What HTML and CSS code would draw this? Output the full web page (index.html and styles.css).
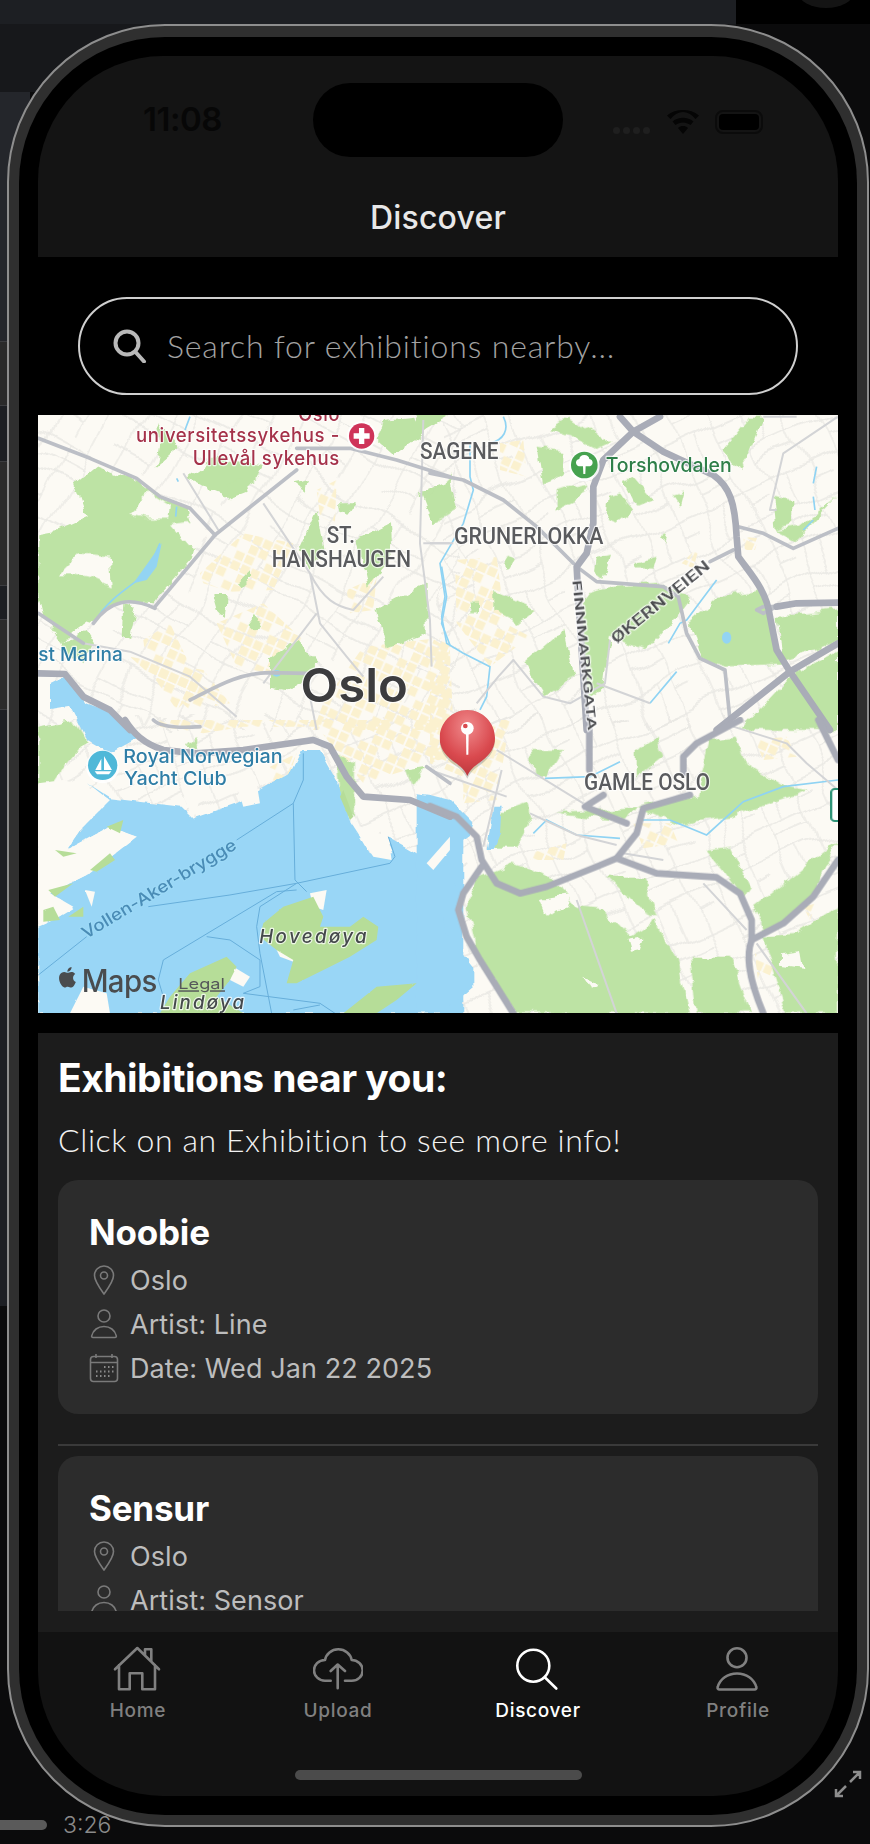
FILE: index.html
```html
<!DOCTYPE html>
<html lang="en">
<head>
<meta charset="utf-8">
<title>Discover</title>
<link rel="stylesheet" href="styles.css">
</head>
<body>
<div class="desktop">
  <div class="desk-top"><div class="desk-tab"></div><div class="desk-corner"><span class="desk-circle"></span></div></div>
  <div class="desk-band"></div>
  <div class="desk-rows">
    <div class="row row-a"></div><div class="row row-b"></div><div class="row row-c"></div><div class="row row-d"></div><div class="row row-e"></div><div class="row row-f"></div><div class="row row-g"></div>
  </div>
  <div class="desk-progress"></div>
  <span class="desk-time">3:26</span>
  <svg class="desk-expand" viewBox="0 0 28 28"><path d="M16 12 26 2M19 2h7v7M12 16 2 26M2 19v7h7"/></svg>
</div>

<div class="phone">
  <div class="bezel">
    <main class="screen">
      <header class="header">
        <div class="status">
          <span class="clock">11:08</span>
          <span class="notch"></span>
          <div class="status-icons">
            <span class="dots"><i></i><i></i><i></i><i></i></span>
            <svg class="wifi" viewBox="0 0 32 24"><path d="M16 24 11 18c3-2.600 7-2.600 10 0zM8.500 15 5.500 11.500c6-5 15-5 21 0L23.500 15c-4.500-3.500-10.500-3.500-15 0zM3.500 9 0 5.500C9-1.800 23-1.800 32 5.500L28.500 9C21-.5 11-.5 3.500 9z"/></svg>
            <span class="battery"><i></i></span>
          </div>
        </div>
        <h1 class="title">Discover</h1>
      </header>

      <div class="search-wrap">
        <div class="search">
          <svg class="search-icon" viewBox="0 0 34 34"><circle cx="14" cy="14" r="11.500"/><path d="m22.500 23 8.500 9.500"/></svg>
          <span class="placeholder">Search for exhibitions nearby...</span>
        </div>
      </div>

      <svg class="map" viewBox="0 0 800 598" role="img" aria-label="Map of Oslo">
        <defs>
          <filter id="rough" x="-5%" y="-5%" width="110%" height="110%">
            <feTurbulence type="fractalNoise" baseFrequency=".06" numOctaves="3" seed="4"/>
            <feDisplacementMap in="SourceGraphic" scale="11" xChannelSelector="R" yChannelSelector="G"/>
          </filter>
          <filter id="shore" x="-5%" y="-5%" width="110%" height="110%">
            <feTurbulence type="fractalNoise" baseFrequency=".09" numOctaves="2" seed="9"/>
            <feDisplacementMap in="SourceGraphic" scale="5" xChannelSelector="R" yChannelSelector="G"/>
          </filter>
          <filter id="wobble" x="0" y="0" width="100%" height="100%">
            <feTurbulence type="fractalNoise" baseFrequency=".014" numOctaves="2" seed="2"/>
            <feDisplacementMap in="SourceGraphic" scale="34" xChannelSelector="G" yChannelSelector="R"/>
          </filter>
          <pattern id="streets" width="84" height="84" patternUnits="userSpaceOnUse" patternTransform="rotate(28)">
            <path d="M0 10H84M0 46H84M0 70H40M14 0V84M62 0V84M38 10V46M14 30H62M40 46V84" class="street"/>
          </pattern>
          <pattern id="streets2" width="70" height="70" patternUnits="userSpaceOnUse" patternTransform="rotate(-24)">
            <path d="M0 8H70M0 44H70M12 0V70M52 0V70M30 8V44M52 24H70M12 58H52" class="street"/>
          </pattern>
          <pattern id="blocks" width="96" height="96" patternUnits="userSpaceOnUse" patternTransform="rotate(24)">
            <path d="M3 3H29V29H3zM35 3H61V29H35zM3 67H29V93H3zM67 35H93V61H67zM35 67H61V93H35zM3 35H29V61H3zM67 67H93V93H67z" class="block"/>
          </pattern>
          <radialGradient id="pinfill" cx=".5" cy=".25" r=".8">
            <stop offset="0" stop-color="#f08a8c"/><stop offset=".6" stop-color="#d9494e"/><stop offset="1" stop-color="#b6353a"/>
          </radialGradient>
        </defs>

        <g class="geometry">
          <rect width="800" height="598" class="land"/>
          <g filter="url(#wobble)">
            <rect x="-20" y="-20" width="440" height="330" fill="url(#streets)"/>
            <rect x="400" y="-20" width="420" height="330" fill="url(#streets2)"/>
            <rect x="-20" y="300" width="840" height="320" fill="url(#streets2)"/>
          </g>

          <!-- yellow city blocks -->
          <g fill="url(#blocks)">
            <g transform="translate(-8 -5) scale(.3333)">
              <path d="M510 490 640 370 790 400 730 540 600 545 520 520z"/>
              <path d="M340 690 420 640 510 830 440 900 350 770z"/>
              <path d="M560 640 700 580 820 690 720 790 620 770z"/>
              <path d="M860 240 920 210 915 340 870 320z"/>
              <path d="M950 540 1040 500 1030 600 960 610z"/>
              <path d="M1000 710 1260 680 1260 960 850 960 880 880z"/>
              <path d="M300 740 520 780 600 880 480 900z"/>
            </g>
            <g transform="translate(392 -5) scale(.3333)">
              <path d="M75 450 200 440 225 640 300 680 180 770 80 640z"/>
              <path d="M0 680 60 720 70 960 0 960z"/>
              <path d="M210 100 280 90 290 200 210 180z"/>
              <path d="M755 460 810 405 790 475z"/>
              <path d="M940 380 985 385 975 420 945 420z"/>
            </g>
            <g transform="translate(-8 305) scale(.3333)">
              <path d="M390 20 520 40 640 20 860 20 1000 190 1260 110 1260 0 380 0z"/>
              <path d="M720 140 800 100 770 190 720 180z"/>
            </g>
            <g transform="translate(392 305) scale(.3333)">
              <path d="M0 0 240 0 200 240 100 250 100 170 0 130z"/>
              <path d="M610 310 720 310 745 370 640 385z"/>
              <path d="M975 60 1070 50 1100 110 1000 120z"/>
              <path d="M975 700 1030 740 1010 790 985 790z"/>
              <path d="M300 400 410 370 400 420 300 420z"/>
              <path d="M1120 560 1160 550 1140 600z"/>
            </g>
          </g>

          <!-- parks -->
          <g class="park" filter="url(#rough)">
            <g transform="translate(-8 -5) scale(.3333)">
              <path d="M135 220 200 165 330 215 395 265 470 290 500 400 490 440 370 580 290 575 210 610 130 665 100 700 40 620 25 560 25 370 80 360 170 320z"/>
              <path d="M470 205 560 140 700 170 680 210 590 260 540 240z"/>
              <path d="M1060 30 1150 20 1170 80 1090 135 1040 90z"/>
              <path d="M1170 250 1240 220 1260 290 1200 330z"/>
              <path d="M810 410 860 300 880 420 840 480z"/>
              <path d="M980 390 1080 340 1085 440 1010 530z"/>
              <path d="M1040 600 1190 520 1190 670 1070 715z"/>
              <path d="M720 750 800 690 860 760 790 840 720 830z"/>
              <path d="M550 555 590 555 585 620 565 610z"/>
              <path d="M650 640 670 610 695 640 670 660z"/>
              <path d="M630 520 660 490 660 510 640 530z"/>
              <path d="M280 580 320 590 300 690 275 680z"/>
              <path d="M930 280 975 280 950 320 935 310z"/>
              <path d="M385 40 450 110 380 170 390 110z"/>
              <path d="M1260 20 1170 0 1100 130 1190 60z"/>
              <path d="M580 220 640 205 650 245 600 265z"/>
              <path d="M790 220 840 210 830 250z"/>
              <path d="M100 700 170 660 195 700 160 760 120 740z"/>
            </g>
            <g transform="translate(392 -5) scale(.3333)">
              <path d="M480 550 550 530 700 520 780 560 720 640 650 720 540 680 520 830 470 870 445 600z"/>
              <path d="M780 640 870 560 1000 540 1040 720 1060 760 890 770 810 745z"/>
              <path d="M1040 620 1224 600 1224 700 1060 750z"/>
              <path d="M930 960 1080 800 1224 720 1224 960z"/>
              <path d="M880 120 960 20 1000 20 950 150 930 180z"/>
              <path d="M1030 260 1090 270 1090 340 1040 360z"/>
              <path d="M320 110 400 120 400 190 340 230z"/>
              <path d="M580 210 610 200 670 270 620 290z"/>
              <path d="M280 760 400 660 430 800 340 860z"/>
              <path d="M190 540 320 600 270 640 190 600z"/>
              <path d="M360 60 420 20 540 100 500 120 420 80z"/>
              <path d="M380 240 470 220 440 270 380 300z"/>
              <path d="M500 450 540 440 520 510 495 490z"/>
              <path d="M115 580 150 580 150 610 115 610z"/>
              <path d="M0 260 60 200 80 300 0 340z"/>
              <path d="M1224 260 1110 350 1040 360 1100 390z"/>
              <path d="M540 260 570 250 610 300 560 340 530 330z"/>
              <path d="M610 460 680 440 670 475 615 475z"/>
              <path d="M690 380 710 370 700 400z"/>
              <path d="M730 260 760 250 750 290z"/>
              <path d="M1180 820 1224 760 1224 950 1150 900z"/>
              <path d="M240 440 260 450 240 480 225 465z"/>
            </g>
            <g transform="translate(-8 305) scale(.3333)">
              <path d="M25 20 130 0 170 60 110 130 70 190 25 190z"/>
              <path d="M470 80 500 50 505 85z"/>
              <path d="M920 100 975 130 975 290 930 260z"/>
              <path d="M1130 150 1190 140 1150 200z"/>
            </g>
            <g transform="translate(392 305) scale(.3333)">
              <path d="M110 560 150 470 250 430 330 460 400 500 430 560 520 570 600 650 680 600 690 630 740 720 780 880 260 880 240 860 140 700z"/>
              <path d="M780 710 900 710 960 880 800 880z"/>
              <path d="M840 60 920 50 950 130 1060 200 1140 210 900 290 740 310 620 260 800 230z"/>
              <path d="M305 90 400 90 350 170 310 170z"/>
              <path d="M180 290 290 250 300 310 260 380 185 380z"/>
              <path d="M970 560 1100 460 1224 360 1140 540 1070 610 1000 640z"/>
              <path d="M1000 650 1100 640 1224 560 1224 880 1070 880z"/>
              <path d="M830 390 900 380 960 500 940 530 880 450z"/>
              <path d="M380 280 620 260 590 300 440 290z"/>
              <path d="M530 470 640 470 680 590 620 560z"/>
              <path d="M620 90 680 50 700 110 620 170z"/>
            </g>
          </g>
          <!-- cleared patches -->
          <g class="land" filter="url(#rough)">
            <g transform="translate(392 305) scale(.3333)">
              <path d="M330 540 420 525 410 565 350 590z"/>
              <path d="M590 660 640 650 630 690 600 695z"/>
              <path d="M460 770 500 790 480 800z"/>
              <path d="M1050 700 1110 690 1120 750 1050 740z"/>
            </g>
            <g transform="translate(-8 -5) scale(.3333)">
              <path d="M90 490 150 430 240 440 245 530 180 500 130 490z"/>
              <path d="M300 310 360 250 420 290 415 320 340 320z"/>
              <path d="M420 340 500 330 540 370 490 420z"/>
            </g>
          </g>

          <!-- water -->
          <g class="water" filter="url(#shore)">
            <g transform="translate(-8 305) scale(.3333)">
              <path d="M25 620 70 600 130 565 60 520 180 460 320 350 240 320 110 390 150 330 235 240 170 190 240 235 455 260 490 295 620 250 780 160 815 90 870 90 920 180 960 300 1020 400 1090 400 1070 350 1190 420 1260 300 1300 300 1300 880 25 880z"/>
              <path d="M60 -110 110 -135 170 -50 250 -20 330 50 240 100 170 60 120 -40 60 -30z"/>
            </g>
            <g transform="translate(392 305) scale(.3333)">
              <path d="M-40 220 0 225 60 240 130 310 120 345 70 380 20 440 50 440 80 500 30 570 50 640 130 740 130 800 60 860 40 880-40 880z"/>
              <path d="M190 260 215 260 210 340 190 390 170 390z"/>
            </g>
          </g>
          <!-- islands -->
          <g transform="translate(-8 305) scale(.3333)" filter="url(#shore)">
            <g class="land">
              <path d="M25 190 100 180 170 200 240 240 150 330 110 390 240 320 320 350 180 460 60 520 130 560 70 600 25 610z"/>
              <path d="M625 210 680 190 690 250 640 260z"/>
              <path d="M460 230 520 210 490 295z"/>
              <path d="M120 880 160 800 230 820 240 880z"/>
              <path d="M840 520 890 510 880 570 850 560z"/>
              <path d="M740 690 800 700 790 725 750 710z"/>
              <path d="M965 310 1075 350 1085 420 1030 410z"/>
              <path d="M1190 430 1260 350 1260 390 1210 450z"/>
              <path d="M610 740 660 770 640 800 600 780z"/>
              <path d="M165 510 195 515 185 560z"/>
            </g>
            <g class="park light">
              <path d="M700 610 760 560 850 530 880 590 870 620 960 620 1000 590 1045 620 1040 660 960 710 900 740 800 790 770 790 790 720 740 690 690 650z"/>
              <path d="M480 760 590 710 620 740 600 780 560 830 640 880 390 880 420 830z"/>
              <path d="M940 880 1040 800 1160 790 1100 840 1040 880z"/>
              <path d="M75 390 140 400 100 410z"/>
              <path d="M180 450 240 400 255 420 200 455z"/>
              <path d="M230 320 280 300 270 340z"/>
              <path d="M55 510 130 490 75 530z"/>
              <path d="M115 590 160 560 160 590z"/>
              <path d="M40 570 70 560 90 600 40 605z"/>
              <path d="M930 230 960 300 970 290 940 210z"/>
            </g>
          </g>

          <!-- river and streams -->
          <g class="stream">
            <g transform="translate(-8 -5) scale(.3333)">
              <path d="M195 635C230 570 300 530 350 490L390 400"/>
              <path d="M1235 470 1250 560 1235 640 1260 705"/>
              <path d="M440 205 445 215M440 290 437 320M480 20 465 60"/>
            </g>
            <g transform="translate(392 -5) scale(.3333)">
              <path d="M220 20C240 60 220 90 180 100M120 100 120 200 130 240 100 340 30 460 45 560 35 620 50 700 100 730 180 770 170 860 150 900"/>
              <path d="M715 700 750 640 770 630 830 550 860 510M660 880 740 785"/>
              <path d="M1150 220 1160 170M1155 300 1150 260M1120 360 1150 330"/>
            </g>
            <g transform="translate(392 305) scale(.3333)">
              <path d="M345 175 480 170 570 125"/>
              <path d="M310 340 350 300 440 345 570 355M630 300 720 300 830 345 940 245 1060 200 1224 180"/>
            </g>
          </g>
          <g class="pond">
            <g transform="translate(-8 -5) scale(.3333)">
              <path d="M310 520 360 450 395 400 380 470 350 510z"/>
              <ellipse cx="740" cy="790" rx="12" ry="10"/>
            </g>
            <g transform="translate(392 -5) scale(.3333)">
              <ellipse cx="890" cy="683" rx="14" ry="18"/>
            </g>
          </g>

          <!-- ferry lines -->
          <g class="ferry" transform="translate(-8 305) scale(.3333)">
            <path d="M25 765 170 650M355 560 600 525 800 490 1080 430 1095 410 1075 350M620 360 790 250 820 180 820 100M790 250 795 480 830 515M800 490 690 560 680 620 690 700 725 880M800 510 740 515 400 720 385 780 400 830M530 650 600 660 690 720 690 800 640 820 870 850 915 880M790 870 870 855"/>
          </g>

          <!-- roads, light -->
          <g class="road-s">
            <g transform="translate(-8 -5) scale(.3333)">
              <path d="M700 280 840 490 870 640 950 740 1000 800M840 490C880 570 920 590 970 600L1060 500M1180 30 1170 400 1200 630 1205 770M1180 400H1260M700 820 860 610M300 725 480 800 620 920M840 860 860 960"/>
              <path d="M460 190 565 360M25 610 100 660 160 700 300 725"/>
            </g>
            <g transform="translate(392 -5) scale(.3333)">
              <path d="M1040 300 1020 300 1060 130 1224 20M1000 20 1100 20M0 400H70M540 690 525 820 420 880 340 860 250 750 205 800 140 880"/>
              <path d="M660 880 500 820"/>
            </g>
            <g transform="translate(392 305) scale(.3333)">
              <path d="M0 150 230 230M200 90 460 250M215 150 160 380M910 20 1070 70 1130 130 1224 210M820 490 950 630M440 540 560 880M980 670 1130 880"/>
              <path d="M300 280 440 345 560 375M580 400 700 420"/>
            </g>
          </g>
          <g class="road-m">
            <g transform="translate(-8 -5) scale(.3333)">
              <path d="M25 85 180 145 320 205 390 260 480 295 555 375"/>
              <path d="M555 375 800 180"/>
              <path d="M555 375 375 590"/>
              <path d="M375 595C300 560 240 570 190 640 M25 610 100 660 160 700"/>
              <path d="M800 115 960 115 1100 150 1260 200"/>
            </g>
            <g transform="translate(392 -5) scale(.3333)">
              <path d="M0 190 100 210 220 270 320 350 430 460"/>
              <path d="M440 470 500 515 700 530 745 560 770 670 810 745 885 780 900 930"/>
              <path d="M925 350 1000 370 1090 415 1224 355"/>
              <path d="M840 455 910 420"/>
              <path d="M1040 590 1000 590 980 600 1000 610 1040 590"/>
            </g>
            <g transform="translate(-8 305) scale(.3333)">
              <path d="M370 0C390 20 440 25 510 20M480 -60C560 -100 620 -140 720 -142L830 -140"/>
              <path d="M1190 140 1260 190"/>
            </g>
          </g>
          <!-- motorways -->
          <g class="road-l">
            <g transform="translate(392 -5) scale(.3333)">
              <path d="M570 20 610 65 700 125 850 195C900 230 915 280 920 380L925 440C960 490 1010 540 1020 620L1040 720 1080 785 1200 960"/>
              <path d="M690 20 610 65 520 150 490 230 490 340 470 430 440 470 445 560 470 960"/>
              <path d="M860 960 1080 785 1224 700"/>
              <path d="M1040 590 1100 580 1224 578"/>
            </g>
            <g transform="translate(-8 305) scale(.3333)">
              <path d="M285 0C310 40 340 70 400 90L500 100 640 90 850 60 900 80 950 170 1000 230 1140 240 1260 290"/>
              <path d="M25 -140 105 -138 160 -70 240 -30 300 30"/>
            </g>
            <g transform="translate(392 305) scale(.3333)">
              <path d="M0 258 80 290 140 350 155 420 200 490 270 520 350 500 500 440 560 415 620 340 640 265 780 225"/>
              <path d="M560 415 680 460 860 472 930 520 965 600 965 660C950 700 950 760 1000 880"/>
              <path d="M965 660 1060 610 1150 530 1224 420"/>
              <path d="M155 440 100 520 85 570 110 650 150 720 250 880"/>
              <path d="M478 0V150M760 160 760 110 800 70 930 0M1165 0 1224 120"/>
              <path d="M520 225 465 260 590 310"/>
            </g>
          </g>
        </g>

        <!-- sign at the right edge -->
        <g transform="translate(392 305) scale(.3333)">
          <rect x="1204" y="207" width="40" height="96" rx="10" class="sign"/>
        </g>

        <!-- labels -->
        <g transform="translate(-8 -5) scale(.3333)">
          <text x="805" y="32" class="lb red" textLength="125" lengthAdjust="spacingAndGlyphs">Oslo</text>
          <text x="318" y="97" class="lb red" textLength="612" lengthAdjust="spacingAndGlyphs">universitetssykehus -</text>
          <text x="488" y="165" class="lb red" textLength="442" lengthAdjust="spacingAndGlyphs">Ullevål sykehus</text>
          <circle cx="995" cy="78" r="44" class="poi-ring"/>
          <circle cx="995" cy="78" r="38" class="poi-red"/>
          <path d="M987 54h16v16h16v16h-16v16h-16V86h-16V70h16z" class="poi-white"/>
          <text x="890" y="400" class="lb dist" textLength="85" lengthAdjust="spacingAndGlyphs">ST.</text>
          <text x="725" y="472" class="lb dist" textLength="418" lengthAdjust="spacingAndGlyphs">HANSHAUGEN</text>
          <text x="25" y="752" class="lb sea" textLength="253" lengthAdjust="spacingAndGlyphs">st Marina</text>
          <text x="812" y="875" class="lb city" textLength="322" lengthAdjust="spacingAndGlyphs">Oslo</text>
        </g>
        <g transform="translate(392 -5) scale(.3333)">
          <text x="-30" y="148" class="lb dist" textLength="235" lengthAdjust="spacingAndGlyphs">SAGENE</text>
          <text x="72" y="402" class="lb dist" textLength="448" lengthAdjust="spacingAndGlyphs">GRUNERLOKKA</text>
          <text x="527" y="185" class="lb park-text" textLength="378" lengthAdjust="spacingAndGlyphs">Torshovdalen</text>
          <circle cx="463" cy="168" r="46" class="poi-ring"/>
          <circle cx="463" cy="165" r="40" class="poi-green"/>
          <path d="M463 135c9 0 15 6 15 12 7 1 10 6 10 11 0 7-6 11-13 11h-8l-1 23h-6l-1-23h-8c-7 0-13-4-13-11 0-5 3-10 10-11 0-6 6-12 15-12z" class="poi-white"/>
          <text transform="translate(428 512) rotate(84)" class="lb road-text road-a" textLength="452" lengthAdjust="spacingAndGlyphs">FINNMARKGATA</text>
          <text transform="translate(558 702) rotate(-39)" class="lb road-text road-b" textLength="366" lengthAdjust="spacingAndGlyphs">ØKERNVEIEN</text>
        </g>
        <g transform="translate(-8 305) scale(.3333)">
          <text x="280" y="130" class="lb sea" textLength="478" lengthAdjust="spacingAndGlyphs">Royal Norwegian</text>
          <text x="283" y="194" class="lb sea" textLength="307" lengthAdjust="spacingAndGlyphs">Yacht Club</text>
          <circle cx="218" cy="140" r="50" class="poi-ring"/>
          <circle cx="218" cy="136" r="44" class="poi-blue"/>
          <path d="M222 108v42h24zM214 116v34h-18zM194 154h50l-7 9h-36z" class="poi-white"/>
          <text transform="translate(168 658) rotate(-31)" class="lb ferry-text" textLength="531" lengthAdjust="spacingAndGlyphs">Vollen-Aker-brygge</text>
          <text x="688" y="670" class="lb isle" textLength="322">Hovedøya</text>
          <text x="390" y="868" class="lb isle" textLength="252">Lindøya</text>
          <path transform="translate(78 736) scale(3)" class="apple" d="M17.050 12.540c-.03-2.600 2.120-3.850 2.220-3.910-1.210-1.770-3.090-2.010-3.760-2.040-1.600-.16-3.120.94-3.930.94-.81 0-2.060-.92-3.390-.89-1.740.03-3.350 1.010-4.250 2.570-1.810 3.140-.46 7.800 1.300 10.350.86 1.250 1.890 2.650 3.240 2.600 1.300-.05 1.790-.84 3.360-.84 1.570 0 2.010.84 3.390.81 1.400-.02 2.280-1.270 3.130-2.530.99-1.450 1.390-2.860 1.420-2.930-.03-.01-2.710-1.040-2.730-4.130zM14.460 4.890c.72-.87 1.200-2.080 1.070-3.280-1.030.04-2.280.69-3.020 1.550-.66.770-1.240 2-1.090 3.180 1.150.09 2.320-.58 3.040-1.450z"/>
          <text x="155" y="815" class="maps" textLength="225" lengthAdjust="spacingAndGlyphs">Maps</text>
          <text x="445" y="808" class="legal" textLength="140" lengthAdjust="spacingAndGlyphs">Legal</text>
        </g>
        <g transform="translate(392 305) scale(.3333)">
          <text x="462" y="210" class="lb dist" textLength="378" lengthAdjust="spacingAndGlyphs">GAMLE OSLO</text>
          <path d="M112 176c-12-26-30-34-50-50C40 108 29 85 29 58 29 11 66-30 112-30s83 41 83 88c0 27-11 50-33 68-20 16-38 24-50 50z" class="pin-shadow"/>
          <path d="M112 168c-10-24-28-33-46-47C43 103 29 82 29 54 29 8 66-30 112-30s83 38 83 84c0 28-14 49-37 67-18 14-36 23-46 47z" fill="url(#pinfill)"/>
          <circle cx="112" cy="25" r="19" class="poi-white"/>
          <circle cx="106" cy="18" r="7" class="pin-dot"/>
          <path d="M108 40h8l-1 64h-6z" class="poi-white"/>
        </g>
      </svg>

      <section class="panel">
        <div class="panel-inner">
          <h2 class="panel-title">Exhibitions near you:</h2>
          <p class="panel-sub">Click on an Exhibition to see more info!</p>

          <article class="card">
            <h3 class="card-title">Noobie</h3>
            <div class="meta">
              <svg class="meta-icon" viewBox="0 0 32 30"><path d="M16 29C11 22 6.500 16 6.500 10.500a9.500 9.500 0 0 1 19 0C25.500 16 21 22 16 29z"/><circle cx="16" cy="10.500" r="3.500"/></svg>
              <span>Oslo</span>
            </div>
            <div class="meta">
              <svg class="meta-icon" viewBox="0 0 32 30"><circle cx="16" cy="7" r="6"/><path d="M5 28.500h22c1 0 1.500-.6 1.300-1.600C27 21 22 17.500 16 17.500S5 21 3.700 26.900c-.2 1 .3 1.600 1.300 1.600z"/></svg>
              <span>Artist: Line</span>
            </div>
            <div class="meta">
              <svg class="meta-icon" viewBox="0 0 32 30"><rect x="2.500" y="3.500" width="27" height="25" rx="3"/><path d="M2.500 9.500h27M8 1v4M24 1v4"/><path class="cal-dots" d="M16 14h1.500M20 14h1.500M24 14h1.500M8 18.500h1.500M12 18.500h1.500M16 18.500h1.500M20 18.500h1.500M24 18.500h1.500M8 23h1.500M12 23h1.500M16 23h1.500M20 23h1.500"/></svg>
              <span>Date: Wed Jan 22 2025</span>
            </div>
          </article>

          <hr class="divider">

          <article class="card">
            <h3 class="card-title">Sensur</h3>
            <div class="meta">
              <svg class="meta-icon" viewBox="0 0 32 30"><path d="M16 29C11 22 6.500 16 6.500 10.500a9.500 9.500 0 0 1 19 0C25.500 16 21 22 16 29z"/><circle cx="16" cy="10.500" r="3.500"/></svg>
              <span>Oslo</span>
            </div>
            <div class="meta">
              <svg class="meta-icon" viewBox="0 0 32 30"><circle cx="16" cy="7" r="6"/><path d="M5 28.500h22c1 0 1.500-.6 1.300-1.600C27 21 22 17.500 16 17.500S5 21 3.700 26.900c-.2 1 .3 1.600 1.300 1.600z"/></svg>
              <span>Artist: Sensor</span>
            </div>
          </article>
        </div>
      </section>

      <nav class="tabs">
        <div class="tab">
          <svg class="tab-icon" viewBox="0 0 50 46"><path d="M2 23.300 24.300 2 46 23.300M32 9.700V3.300h6.300v12.400M6 19v24.300h10.700V27.300h12.600v16H42V19"/></svg>
          <span class="tab-label">Home</span>
        </div>
        <div class="tab">
          <svg class="tab-icon" viewBox="0 0 50 46"><path d="M17.700 34.700H12C6 34.700 1 30 1 24.500S5.500 14 12 14C13 8 18.500 3.300 25.300 3.300S37.700 8 38.700 14C44.500 14 49.700 18.500 49.700 24.500S44.500 34.700 38.700 34.700H32M24.700 42.300V19M17.700 25l7-6.500 7.300 6.500"/></svg>
          <span class="tab-label">Upload</span>
        </div>
        <div class="tab tab-active">
          <svg class="tab-icon" viewBox="0 0 50 46"><circle cx="20.300" cy="19.700" r="16"/><path d="m32 31.500 11.300 11"/></svg>
          <span class="tab-label">Discover</span>
        </div>
        <div class="tab">
          <svg class="tab-icon" viewBox="0 0 50 46"><circle cx="24" cy="11.700" r="9.500"/><path d="M6.500 43.500h35c1.500 0 2.300-1 1.800-2.500C41 33 33.500 27.500 24 27.500S7 33 4.700 41c-.5 1.500.3 2.500 1.800 2.500z"/></svg>
          <span class="tab-label">Profile</span>
        </div>
      </nav>
      <span class="home-bar"></span>
    </main>
  </div>
</div>
</body>
</html>
```
FILE: styles.css
```css
* { box-sizing: border-box; }
html, body { margin: 0; padding: 0; }
body {
  position: relative;
  width: 870px;
  height: 1844px;
  overflow: hidden;
  background: #0b0b0c;
  font-family: Inter, "Liberation Sans", sans-serif;
}

/* Desktop behind the simulator */
.desktop { position: absolute; inset: 0; }
.desk-top { display: flex; height: 24px; }
.desk-tab { width: 736px; background: #1d1f23; }
.desk-corner { flex: 1; background: #000; position: relative; overflow: hidden; }
.desk-circle { position: absolute; left: 62px; top: -24px; width: 56px; height: 32px; border-radius: 50%; background: #141414; }
.desk-band { width: 736px; height: 68px; background: #17181b; }
.desk-rows { width: 30px; display: flex; flex-direction: column; }
.row { border-bottom: 1px solid #3c3d40; }
.row-a { height: 250px; background: #24262b; }
.row-b { height: 64px; background: #2a2a2a; }
.row-c { height: 56px; background: #1c1e22; }
.row-d { height: 124px; background: #2b2b2b; }
.row-e { height: 34px; background: #1c1e22; }
.row-f { height: 90px; background: #2b2b2b; }
.row-g { height: 596px; background: #1d1f24; border-bottom: 0; }
.desk-progress { position: absolute; left: 0; top: 1820px; width: 47px; height: 10px; border-radius: 0 5px 5px 0; background: #5a5a5a; }
.desk-time { position: absolute; left: 63px; top: 1811px; font-size: 23px; color: #8a8a8a; font-weight: 300; }
.desk-expand { position: absolute; left: 834px; top: 1770px; width: 28px; height: 28px; fill: none; stroke: #8d8d8d; stroke-width: 2.500; }

/* Device */
.phone {
  position: absolute;
  left: 7px;
  top: 24px;
  width: 862px;
  height: 1803px;
  padding: 11px 10px 10px 10px;
  border-radius: 158px;
  background: #2f2f2f;
  border: 2px solid #8e8e8e;
}
.bezel {
  height: 100%;
  padding: 19px 19px 20px 19px;
  border-radius: 146px;
  background: #000;
}
.screen {
  position: relative;
  width: 800px;
  height: 1740px;
  display: flex;
  flex-direction: column;
  overflow: hidden;
  border-radius: 125px;
  background: #000;
}

/* Header */
.header { height: 201px; padding-top: 27px; background: #141414; flex: none; }
.status { position: relative; display: flex; justify-content: center; height: 74px; }
.clock { position: absolute; left: 105px; top: 16px; font-size: 33px; line-height: 40px; font-weight: 600; color: #070707; letter-spacing: -.5px; }
.notch { width: 250px; height: 74px; border-radius: 37px; background: #000; }
.status-icons { position: absolute; left: 575px; top: 25px; display: flex; align-items: flex-end; gap: 17px; height: 26px; }
.dots { display: flex; gap: 3px; }
.dots i { width: 7px; height: 7px; border-radius: 50%; background: #1f1f1f; }
.wifi { width: 32px; height: 24px; fill: #050505; }
.battery { position: relative; width: 48px; height: 24px; margin-left: -1px; border: 2px solid #0b0b0b; border-radius: 8px; padding: 2px; }
.battery i { display: block; height: 100%; border-radius: 4px; background: #000; }
.title {
  margin: 42px 0 0;
  text-align: center;
  font-size: 32px;
  line-height: 38px;
  font-weight: 500;
  color: #e8e8e8;
  letter-spacing: .2px;
}

/* Search */
.search-wrap { flex: none; height: 158px; padding: 40px 40px 20px; background: #000; }
.search {
  display: flex;
  align-items: center;
  height: 98px;
  padding-left: 33px;
  border: 2px solid #cfcfcf;
  border-radius: 49px;
}
.search-icon { width: 34px; height: 34px; fill: none; stroke: #b9b9b9; stroke-width: 4; stroke-linecap: round; flex: none; }
.placeholder { margin: -2px 0 0 20px; font-family: Lato, "Open Sans", sans-serif; font-weight: 300; font-size: 32px; color: #a2a2a2; letter-spacing: .85px; }

/* Map */
.map { display: block; flex: none; width: 800px; height: 598px; }
.geometry { filter: blur(.35px); }
.land { fill: #fcfaf4; }
.street { fill: none; stroke: #e9e8e4; stroke-width: 1.300; }
.block { fill: #fbf1cf; }
.park { fill: #bde3a4; }
.park.light { fill: #b6dd98; }
.water { fill: #99d6f6; }
.stream { fill: none; stroke: #8fd3f3; stroke-width: 5; }
.pond { fill: #93d4f3; }
.ferry { fill: none; stroke: #66aeda; stroke-width: 3; }
.road-s { fill: none; stroke: #d3d4d6; stroke-width: 6; stroke-linejoin: round; }
.road-m { fill: none; stroke: #bcbfc6; stroke-width: 11; stroke-linejoin: round; stroke-linecap: round; }
.road-l { fill: none; stroke: #a9acb7; stroke-width: 20; stroke-linejoin: round; stroke-linecap: round; }
.sign { fill: #fff; stroke: #2f9478; stroke-width: 6; }

.lb { font-family: Inter, sans-serif; font-size: 60px; font-weight: 500; paint-order: stroke; stroke: rgba(255,255,255,.75); stroke-width: 7px; stroke-linejoin: round; }
.red { fill: #a5324a; letter-spacing: 2px; }
.dist { font-family: Roboto, sans-serif; font-size: 72px; fill: #5a5b5e; }
.sea { fill: #2f7ea6; font-size: 58px; }
.city { font-size: 140px; font-weight: 600; fill: #3c3c3e; }
.park-text { fill: #2f7f49; font-size: 60px; }
.road-text { font-family: Roboto, sans-serif; fill: #4c4d50; }
.road-a { font-size: 38px; }
.road-b { font-size: 46px; }
.ferry-text { fill: #4a8cb6; font-size: 50px; stroke: rgba(160,220,247,.6); }
.isle { font-style: italic; fill: #45494c; font-size: 56px; font-weight: 500; }
.poi-ring { fill: #fff; opacity: .85; }
.poi-red { fill: #cf3459; }
.poi-green { fill: #46a24f; }
.poi-blue { fill: #4fb8d8; }
.poi-white { fill: #fff; }
.apple { fill: #4a4c4e; }
.maps { font-family: Inter, sans-serif; font-size: 92px; font-weight: 500; fill: #4a4c4e; letter-spacing: -2px; }
.legal { font-family: Inter, sans-serif; font-size: 44px; fill: #56585a; text-decoration: underline; }
.pin-shadow { fill: rgba(0,0,0,.18); }
.pin-dot { fill: #d9494e; }

/* Panel */
.panel { flex: none; height: 599px; margin-top: 20px; padding: 0 20px 21px; background: #1c1c1c; }
.panel-inner { height: 100%; overflow: hidden; }
.panel-title { margin: 22px 0 0; font-size: 39px; line-height: 46px; font-weight: 700; color: #fff; letter-spacing: -.52px; }
.panel-sub { margin: 17px 0 0; font-family: Lato, "Open Sans", sans-serif; font-weight: 300; font-size: 32px; line-height: 44px; color: #f2f2f2; letter-spacing: .6px; }
.card { height: 234px; padding: 30px 31px; border-radius: 20px; background: #2c2c2c; }
.panel-sub + .card { margin-top: 18px; }
.card-title { margin: 0 0 4px; font-size: 35px; line-height: 44px; font-weight: 700; color: #fff; letter-spacing: -.2px; }
.meta { display: flex; align-items: center; height: 44px; gap: 10px; margin-left: -1px; font-size: 27px; letter-spacing: .08px; color: #bdbdbd; }
.meta-icon { width: 32px; height: 30px; flex: none; fill: none; stroke: #7a7a7a; stroke-width: 1.600; }
.cal-dots { stroke: #8a8a8a; stroke-width: 2.200; }
.divider { height: 2px; margin: 30px 0 10px; border: 0; background: #3a3a3a; }

/* Tabs */
.tabs { flex: none; height: 164px; display: grid; grid-template-columns: repeat(4, 200px); padding-top: 14px; background: #121212; }
.tab { display: flex; flex-direction: column; align-items: center; color: #808080; }
.tab-active { color: #fff; }
.tab-icon { width: 50px; height: 46px; fill: none; stroke: currentColor; stroke-width: 2.600; stroke-linecap: round; stroke-linejoin: round; }
.tab-label { margin-top: 6px; font-size: 19px; line-height: 26px; font-weight: 500; letter-spacing: .7px; }
.home-bar { position: absolute; left: 257px; top: 1714px; width: 287px; height: 10px; border-radius: 5px; background: #4b4b4b; }
```
